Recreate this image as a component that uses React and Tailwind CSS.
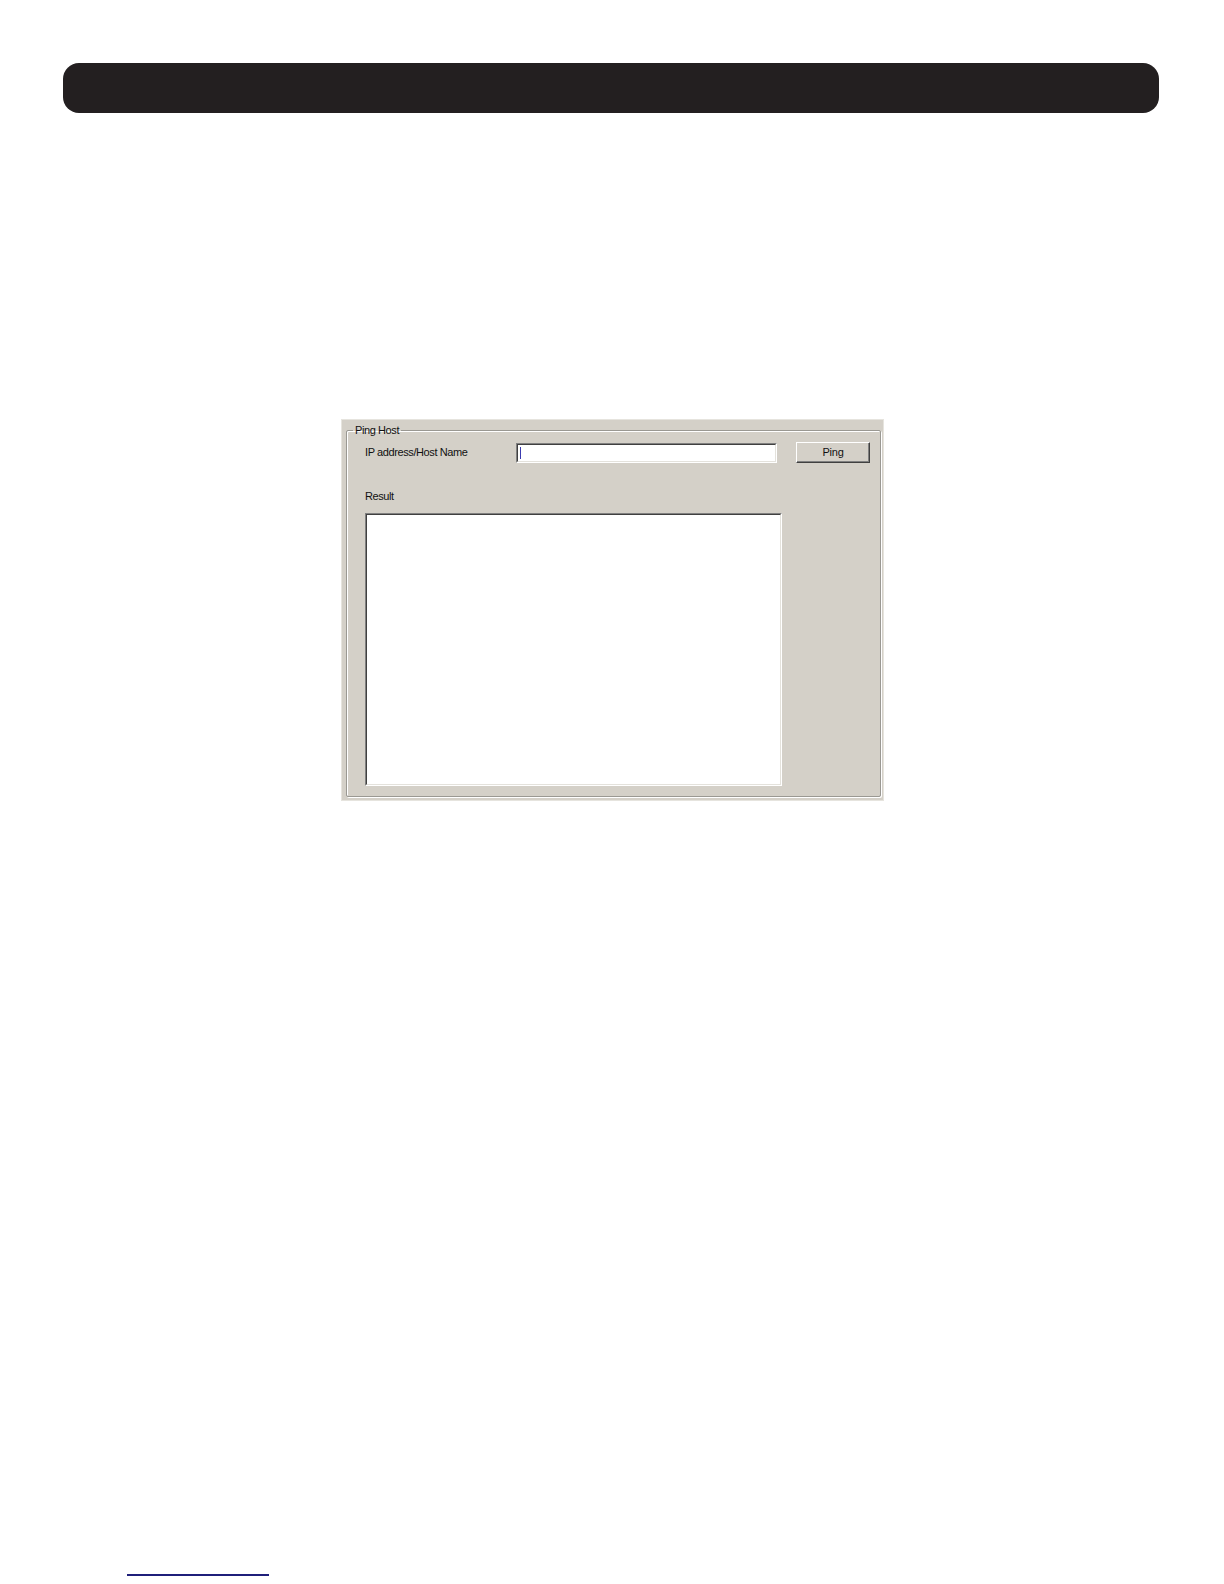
export default function App() {
  const font = { fontFamily: '"Liberation Sans", Arial, sans-serif' };

  return (
    <div className="h-[1584px] w-full overflow-hidden bg-white" style={font}>
      <div className="h-[63px]" />
      <div className="ml-[63px] h-[50px] w-[1096px] rounded-[16px] bg-[#231f20]" />

      <div className="ml-[341px] mt-[306px] h-[382px] w-[543px] border border-[#e6e4de] bg-[#d4d0c8] pb-[3px] pl-[4px] pr-[3px] pt-[4px]">
        <fieldset className="h-full rounded-[2px] border border-[#9a9892] pb-[9px] shadow-[inset_1px_1px_0_#ffffff,1px_1px_0_#ffffff]">
          <legend className="ml-[6px] px-[2px] text-[11px] leading-[13px] tracking-[-0.4px] text-[#111]">
            Ping Host
          </legend>

          <div className="pl-[18px] pr-[10px]">
            <div className="mt-[5px] flex h-[21px] items-center">
              <span className="w-[151px] text-[11px] leading-[13px] tracking-[-0.4px] text-[#111]">
                IP address/Host Name
              </span>
              <div className="mt-[1px] flex h-[20px] w-[261px] border border-t-[#808080] border-l-[#808080] border-b-white border-r-white bg-white">
                <div className="flex h-full w-full items-center border border-t-[#404040] border-l-[#404040] border-b-[#e4e2dc] border-r-[#e4e2dc] pl-[2px]">
                  <span className="h-[12px] w-[1px] bg-[#3b3bb0]" />
                </div>
              </div>
              <button className="ml-[19px] flex h-[21px] w-[74px] items-center justify-center border border-t-white border-l-white border-b-[#404040] border-r-[#404040] bg-[#d4d0c8] text-[11px] leading-[13px] tracking-[-0.2px] text-[#111] shadow-[inset_-1px_-1px_0_#808080]">
                Ping
              </button>
            </div>

            <div className="mt-[27px] text-[11px] leading-[13px] tracking-[-0.4px] text-[#111]">
              Result
            </div>

            <div className="mt-[10px] h-[273px] w-[417px] border border-t-[#808080] border-l-[#808080] border-b-white border-r-white bg-white">
              <div className="h-full w-full border border-t-[#404040] border-l-[#404040] border-b-[#e4e2dc] border-r-[#e4e2dc]" />
            </div>
          </div>
        </fieldset>
      </div>

      <div className="ml-[127px] mt-[773px] h-[2px] w-[142px] bg-[#1f1f7a]" />
    </div>
  );
}
